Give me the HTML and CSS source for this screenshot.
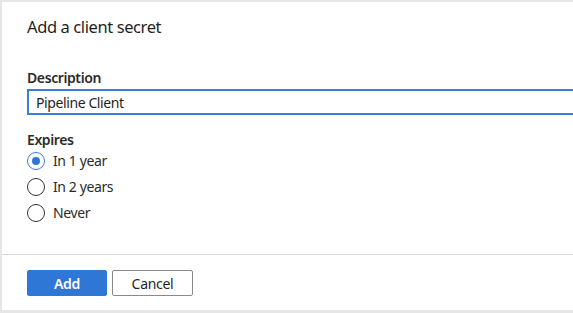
FILE: index.html
```html
<!DOCTYPE html>
<html lang="en">
<head>
    <meta charset="UTF-8">
    <meta name="viewport" content="width=device-width, initial-scale=1.0">
    <title>Add a client secret</title>
    <link rel="stylesheet" href="styles.css">
</head>
<body>
    <div class="panel">
        <div class="panel-body">
            <h1 class="title">Add a client secret</h1>

            <div class="field">
                <label class="label" for="desc">Description</label>
                <input class="text-input" id="desc" type="text" value="Pipeline Client">
            </div>

            <div class="field expires">
                <div class="label">Expires</div>
                <div class="radio-list">
                    <label class="radio checked"><span class="dot"></span>In 1 year</label>
                    <label class="radio"><span class="dot"></span>In 2 years</label>
                    <label class="radio"><span class="dot"></span>Never</label>
                </div>
            </div>
        </div>

        <div class="panel-footer">
            <button class="btn btn-primary">Add</button>
            <button class="btn btn-default">Cancel</button>
        </div>
    </div>
</body>
</html>
```

FILE: styles.css
```css
body{
    margin: 0;
    background: #e6e6e6;
    font-family: 'Noto Sans', 'Open Sans', sans-serif;
    color: #1f1f1f;
    letter-spacing: -0.4px;
}
.panel{
    margin: 2px 0 0 2px;
    height: 308px;
    background: #fff;
    display: flex;
    flex-direction: column;
}
.panel-body{
    padding: 14px 0 0 25px;
    height: 253px;
    border-bottom: 1px solid #dadada;
    box-sizing: border-box;
}
.title{
    margin: 0;
    font-size: 16.5px;
    font-weight: 400;
    line-height: 22px;
    letter-spacing: -0.4px;
}
.field{
    margin-top: 31px;
}
.label{
    display: block;
    font-size: 14px;
    font-weight: 600;
    line-height: 18px;
    color: #2b2b2b;
}
.text-input{
    display: block;
    margin-top: 2px;
    width: 560px;
    height: 26px;
    box-sizing: border-box;
    border: 2px solid #3c7fd9;
    padding: 0 7px;
    font-family: inherit;
    font-size: 14px;
    letter-spacing: -0.4px;
    color: #1f1f1f;
    outline: none;
}
.expires{
    margin-top: 16px;
}
.radio-list{
    display: flex;
    flex-direction: column;
    gap: 8px;
    margin-top: 3px;
}
.radio{
    display: flex;
    align-items: center;
    gap: 8px;
    font-size: 14px;
    line-height: 18px;
    color: #2b2b2b;
}
.dot{
    width: 18px;
    height: 18px;
    box-sizing: border-box;
    border: 1px solid #323232;
    border-radius: 50%;
    position: relative;
}
.radio.checked .dot{
    border-color: #3c7fd9;
}
.radio.checked .dot::after{
    content: "";
    position: absolute;
    left: 4px;
    top: 4px;
    width: 8px;
    height: 8px;
    border-radius: 50%;
    background: #2f77d6;
}
.panel-footer{
    display: flex;
    gap: 5px;
    padding: 15px 0 0 25px;
}
.btn{
    height: 26px;
    width: 80px;
    font-family: inherit;
    font-size: 14px;
    letter-spacing: -0.3px;
    border-radius: 2px;
    padding: 0;
}
.btn-primary{
    background: #2f77d6;
    border: 1px solid #2f77d6;
    color: #fff;
    font-weight: 600;
}
.btn-default{
    width: 81px;
    background: #fff;
    border: 1px solid #8a8a8a;
    color: #1f1f1f;
}
```
